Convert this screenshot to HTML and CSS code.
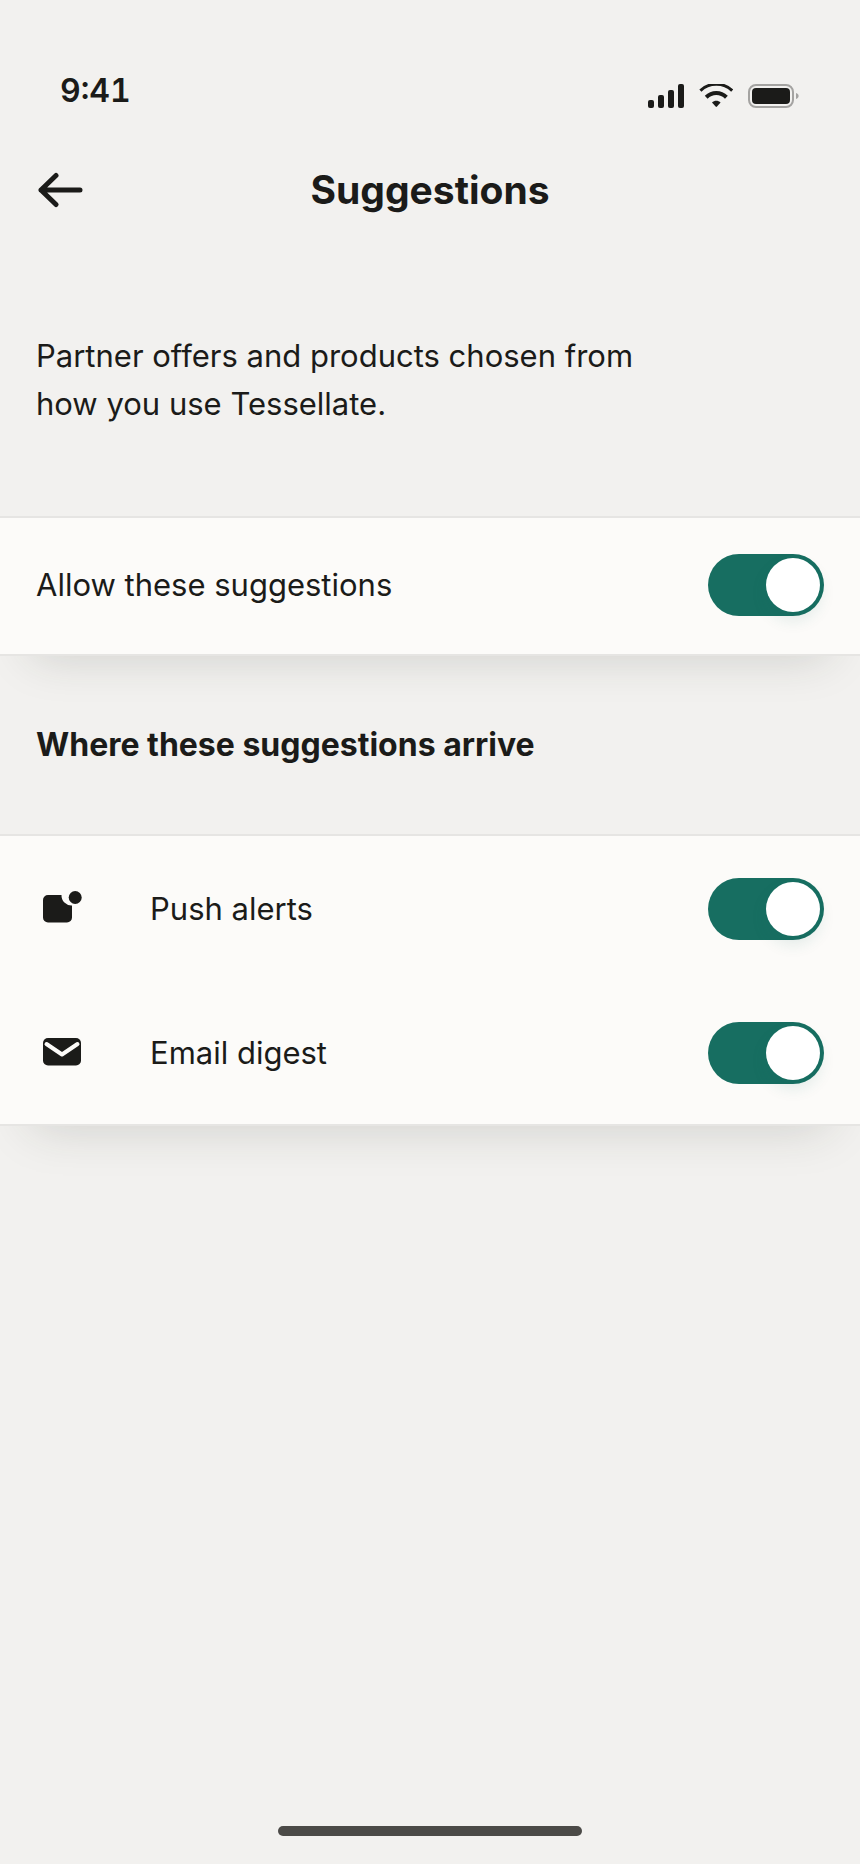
FILE: index.html
```
<!DOCTYPE html>
<html lang="en">
  <head>
    <meta charset="UTF-8" />
    <meta name="viewport" content="width=device-width, initial-scale=1.0" />
    <title>Suggestions</title>
    <link rel="stylesheet" href="styles.css">
  </head>
  <body>
    <div class="status-bar">
      <span class="status-time">9:41</span>
      <div class="status-icons">
        <svg width="36" height="24" viewBox="0 0 36 24" aria-hidden="true">
          <rect x="0" y="16" width="6" height="8" rx="2" />
          <rect x="10" y="11" width="6" height="13" rx="2" />
          <rect x="20" y="6" width="6" height="18" rx="2" />
          <rect x="30" y="0" width="6" height="24" rx="2" />
        </svg>
        <svg width="34" height="24" viewBox="0 0 34 24" aria-hidden="true">
          <path d="M1.4 6.6C10 -1.8 24.6 -1.8 33.2 6.6" fill="none" stroke="currentColor" stroke-width="3" />
          <path d="M7.2 13.2C12.9 7.6 21.7 7.6 27.4 13.2" fill="none" stroke="currentColor" stroke-width="4" />
          <path d="M13 18.4C15.4 16.2 19.2 16.2 21.6 18.4L18 22.6Q17.3 23.3 16.6 22.6Z" />
        </svg>
        <svg width="52" height="24" viewBox="0 0 52 24" aria-hidden="true">
          <rect x="1" y="1" width="44" height="22" rx="7" fill="none" stroke="#a4a3a1" stroke-width="2" />
          <rect x="4" y="4" width="38" height="16" rx="4" />
          <path d="M48 9C51.5 10 51.5 14 48 15Z" fill="#a4a3a1" />
        </svg>
      </div>
    </div>

    <header class="top-bar">
      <button type="button" class="back-btn" aria-label="Back">
        <svg width="48" height="36" viewBox="0 0 48 36" fill="none" stroke="currentColor" stroke-width="5" stroke-linecap="round" stroke-linejoin="round" aria-hidden="true">
          <path d="M44 18H5M20 3.5L5 18L20 32.5" />
        </svg>
      </button>
      <h1>Suggestions</h1>
    </header>

    <main>
      <p class="intro">Partner offers and products chosen from how you use Tessellate.</p>

      <div class="card">
        <div class="row row-single">
          <label for="allow">Allow these suggestions</label>
          <input type="checkbox" role="switch" class="switch" id="allow" checked />
        </div>
      </div>

      <h2>Where these suggestions arrive</h2>

      <div class="card">
        <div class="row">
          <svg class="row-icon" width="52" height="36" viewBox="0 0 52 36" aria-hidden="true">
            <path d="M12 4H25.5A10 10 0 0 0 36 14.5V26.5A5 5 0 0 1 31 31.5H12A5 5 0 0 1 7 26.5V9A5 5 0 0 1 12 4Z" />
            <circle cx="39.2" cy="6.5" r="6.5" />
          </svg>
          <label for="push">Push alerts</label>
          <input type="checkbox" role="switch" class="switch" id="push" checked />
        </div>
        <div class="row">
          <svg class="row-icon" width="52" height="36" viewBox="0 0 52 36" aria-hidden="true">
            <rect x="7" y="3" width="38" height="27.5" rx="5" />
            <path class="flap" d="M10.5 9L26 19.5L41.5 9" />
          </svg>
          <label for="email">Email digest</label>
          <input type="checkbox" role="switch" class="switch" id="email" checked />
        </div>
      </div>
    </main>

    <div class="home-indicator"></div>
  </body>
</html>
```
FILE: styles.css
```
:root {
  --bg: #f2f1ef;
  --card: #fcfbf9;
  --text: #1b1b19;
  --line: #e6e5e3;
  --green: #176e61;
}

* {
  box-sizing: border-box;
  margin: 0;
  padding: 0;
}

body {
  display: flex;
  flex-direction: column;
  min-height: 100vh;
  background: var(--bg);
  color: var(--text);
  font-family: Inter, "Liberation Sans", sans-serif;
  font-size: 31px;
  line-height: 48px;
}

svg {
  display: block;
  flex-shrink: 0;
  fill: currentColor;
}

.status-bar {
  display: flex;
  justify-content: space-between;
  align-items: flex-start;
  padding: 67px 60px 0;
}

.status-time {
  font-size: 32px;
  font-weight: 600;
  font-variant-numeric: tabular-nums;
}

.status-icons {
  display: flex;
  gap: 15px;
  padding-top: 17px;
}

.top-bar {
  display: grid;
  grid-template-columns: 48px 1fr 48px;
  align-items: center;
  padding: 51px 36px 0;
}

.back-btn {
  background: none;
  border: none;
  color: inherit;
  cursor: pointer;
}

.back-btn svg {
  fill: none;
}

h1 {
  font-size: 39px;
  font-weight: 700;
  text-align: center;
}

.intro {
  max-width: 700px;
  padding: 118px 36px 88px;
}

.card {
  background: var(--card);
  border-top: 2px solid var(--line);
  border-bottom: 2px solid var(--line);
  box-shadow: 0 32px 48px -32px rgba(40, 45, 35, 0.18);
}

.row {
  display: flex;
  align-items: center;
  padding: 42px 36px 40px;
}

.row-single {
  padding: 36px 36px 38px;
}

.row-icon {
  margin-right: 62px;
}

.row label {
  flex: 1;
}

.flap {
  fill: none;
  stroke: var(--card);
  stroke-width: 4;
  stroke-linecap: round;
  stroke-linejoin: round;
}

.switch {
  appearance: none;
  display: flex;
  flex-shrink: 0;
  width: 116px;
  height: 62px;
  padding: 4px;
  border-radius: 31px;
  background: #c9c8c5;
  cursor: pointer;
}

.switch::before {
  content: "";
  width: 54px;
  height: 54px;
  border-radius: 50%;
  background: #fff;
}

.switch:checked {
  justify-content: flex-end;
  background: var(--green);
}

.switch:checked::before {
  box-shadow: 0 8px 16px rgba(23, 110, 97, 0.12);
}

h2 {
  padding: 65px 36px;
  font-size: 32px;
  font-weight: 700;
}

.home-indicator {
  width: 304px;
  height: 10px;
  margin: auto auto 28px;
  border-radius: 5px;
  background: #4b4a47;
}
```
